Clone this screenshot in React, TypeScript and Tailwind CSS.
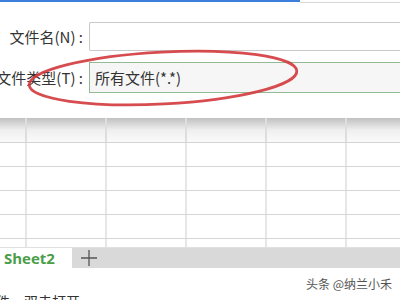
import React from "react";

const cols = [0, 1, 2, 3, 4, 5];
const rows = [0, 1, 2, 3];

export default function App() {
  const font = { fontFamily: '"Noto Sans CJK SC", "Noto Sans", sans-serif' };
  return (
    <div
      className="relative w-[400px] h-[300px] overflow-hidden bg-white text-[#333]"
      style={font}
    >
      {/* top bar */}
      <div className="flex h-[3px]">
        <div className="w-[300px] h-[2px] bg-[#3d7fdc]" />
        <div className="flex-1 border-b border-[#d8d8d8]" />
      </div>

      {/* dialog */}
      <div className="h-[115px] pt-[19px] flex flex-col gap-[11px]">
        <div className="flex items-center h-[29px]">
          <div className="w-[89px] shrink-0 flex justify-end pr-[6px] text-[15px] leading-none whitespace-nowrap">
            文件名(N) :
          </div>
          <div className="flex-1 h-[29px] border border-r-0 border-[#c9c9c9] bg-white rounded-l-[2px]" />
        </div>
        <div className="flex items-center h-[31px]">
          <div className="w-[89px] shrink-0 flex justify-end pr-[6px] text-[15px] leading-none whitespace-nowrap">
            文件类型(T) :
          </div>
          <div className="flex-1 h-[31px] border border-r-0 border-[#93bb93] bg-[#f6f6f6] flex items-center pl-[5px] text-[15px] leading-none">
            所有文件(*.*)
          </div>
        </div>
      </div>

      {/* grid */}
      <div className="h-[129px] flex flex-col">
        <div className="h-[25px] flex bg-gradient-to-b from-[#c0c0c0] via-[#efefef] to-[#fafafa] border-b border-[#d4d4d4]">
          <div className="w-[27px] shrink-0 border-r-2 border-[#dedede]" />
          {cols.map((c) => (
            <div key={c} className="w-[80px] shrink-0 border-r-2 border-[#dedede]" />
          ))}
        </div>
        {rows.map((r) => (
          <div key={r} className="h-[24px] flex border-b border-[#d6d6d6]">
            <div className="w-[27px] shrink-0 border-r-2 border-[#e6e6e6]" />
            {cols.map((c) => (
              <div key={c} className="w-[80px] shrink-0 border-r-2 border-[#e6e6e6]" />
            ))}
          </div>
        ))}
        <div className="flex-1 flex">
          <div className="w-[27px] shrink-0 border-r-2 border-[#e6e6e6]" />
          {cols.map((c) => (
            <div key={c} className="w-[80px] shrink-0 border-r-2 border-[#e6e6e6]" />
          ))}
        </div>
      </div>

      {/* sheet tabs */}
      <div className="h-[21px] flex border-t border-[#e0e0e0]">
        <div className="w-[72px] shrink-0 flex items-center pl-[4px] bg-white">
          <span
            className="text-[15px] font-bold text-[#4a9e4a] leading-none"
            style={{ fontFamily: '"Open Sans", "Noto Sans", sans-serif' }}
          >
            Sheet2
          </span>
        </div>
        <div className="flex-1 bg-[#d9d9d9] flex items-center pl-[8px]">
          <svg width="18" height="18" viewBox="0 0 18 18">
            <path d="M9 1 V17 M1 9 H17" stroke="#555" strokeWidth="1.3" />
          </svg>
        </div>
      </div>

      {/* footer */}
      <div className="relative h-[32px] bg-white">
        <div className="absolute right-[8px] top-[10px] text-[12px] leading-none text-[#555] whitespace-nowrap">
          头条 @纳兰小禾
        </div>
        <div className="absolute left-[-4px] top-[26px] text-[14px] leading-none text-[#333] whitespace-nowrap">
          件，双击打开
        </div>
      </div>

      {/* red annotation ellipse */}
      <svg
        className="absolute left-0 top-0 pointer-events-none"
        width="400"
        height="300"
        viewBox="0 0 400 300"
      >
        <ellipse
          cx="163"
          cy="78"
          rx="134"
          ry="26"
          transform="rotate(-3 163 78)"
          fill="none"
          stroke="#d2383c"
          strokeWidth="2.8"
          opacity="0.9"
        />
      </svg>
    </div>
  );
}
